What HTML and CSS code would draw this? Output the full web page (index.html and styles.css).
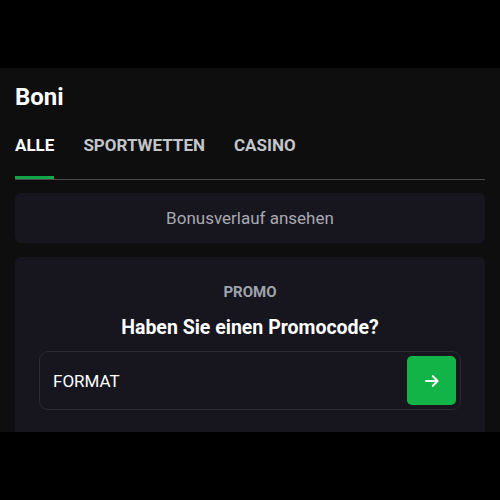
FILE: index.html
```html
<!DOCTYPE html>
<html lang="de">
<head>
    <meta charset="UTF-8">
    <title>Boni</title>
    <meta name="viewport" content="width=device-width, initial-scale=1.0">
    <link rel="stylesheet" href="styles.css">
</head>
<body>
    <div class="topbar"></div>
    <div class="page">
        <h1 class="title">Boni</h1>
        <nav class="tabs">
            <span class="tab active">ALLE</span>
            <span class="tab">SPORTWETTEN</span>
            <span class="tab">CASINO</span>
        </nav>
        <div class="history">Bonusverlauf ansehen</div>
        <div class="promo">
            <div class="promo-label">PROMO</div>
            <h2 class="promo-title">Haben Sie einen Promocode?</h2>
            <div class="promo-field">
                <span class="promo-code">FORMAT</span>
                <button class="promo-go">
                    <svg width="18" height="18" viewBox="0 0 24 24" fill="none" stroke="#fff" stroke-width="2.6" stroke-linecap="round" stroke-linejoin="round"><path d="M4 12h15M13 5.5l6.5 6.5-6.5 6.5"/></svg>
                </button>
            </div>
        </div>
    </div>
</body>
</html>
```
FILE: styles.css
```css
body { margin: 0; background: #000; font-family: Roboto, Arial, sans-serif; height: 500px; overflow: hidden; }
.topbar { height: 68px; background: #000; }
.page { height: 364px; background: #0e0e0f; padding: 0 15px; overflow: hidden; box-sizing: border-box; }
.title { margin: 0; padding-top: 15px; font-size: 24px; font-weight: 700; color: #fff; line-height: 28px; }
.tabs { display: flex; gap: 29px; margin-top: 24px; border-bottom: 1px solid #4a4a4e; }
.tab { font-size: 17px; font-weight: 700; color: #c2c5c9; padding-bottom: 24px; line-height: 20px; }
.tab.active { color: #fff; box-shadow: inset 0 -3px 0 #13a54a; }
.history { margin-top: 13px; height: 50px; background: #17161f; border-radius: 6px; color: #a9a9b2; font-size: 17px; display: flex; align-items: center; justify-content: center; }
.promo { margin-top: 14px; background: #17161f; border-radius: 6px; padding: 27px 24px 30px; text-align: center; }
.promo-label { font-size: 15px; font-weight: 700; color: #9fa3ab; line-height: 16px; }
.promo-title { margin: 17px 0 0; font-size: 19.5px; font-weight: 700; color: #fff; line-height: 22px; }
.promo-field { margin-top: 12px; height: 59px; border: 1px solid #2b2a36; border-radius: 9px; display: flex; align-items: center; justify-content: space-between; padding: 0 4px 0 13px; box-sizing: border-box; }
.promo-code { font-size: 17px; color: #fff; }
.promo-go { width: 49px; height: 49px; border: none; border-radius: 5px; background: #12b447; display: flex; align-items: center; justify-content: center; padding: 0; }
```
